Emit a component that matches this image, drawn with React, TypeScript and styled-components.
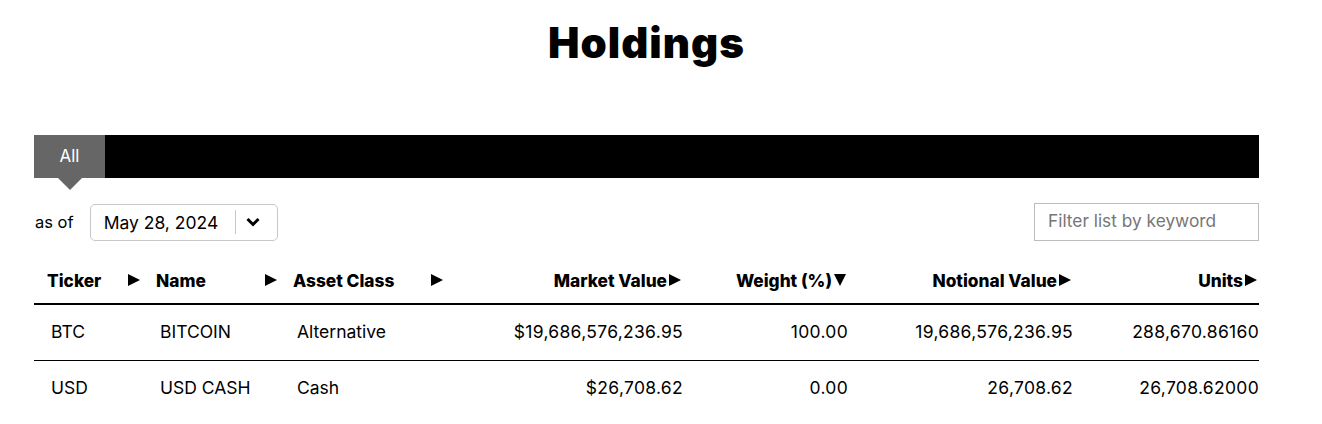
import React from "react";
import styled, { createGlobalStyle } from "styled-components";

const Global = createGlobalStyle`
  html, body { margin: 0; padding: 0; background: #fff; }
  body { font-family: Inter, "Liberation Sans", sans-serif; color: #000; }
  * { box-sizing: border-box; }
`;

const Page = styled.div`
  width: 1225px;
  margin-left: 34px;
  padding-top: 16px;
`;

const Title = styled.h1`
  margin: 0;
  text-align: center;
  font-family: Inter, "Liberation Sans", sans-serif;
  font-weight: 900;
  font-size: 42px;
  letter-spacing: 1px;
  line-height: 54px;
  height: 119px;
`;

const TabBar = styled.div`
  display: flex;
  height: 43px;
  background: #000;
`;

const Tab = styled.div`
  position: relative;
  width: 71px;
  display: flex;
  align-items: center;
  justify-content: center;
  padding-bottom: 2px;
  background: #666;
  color: #fff;
  font-size: 17px;
  &::after {
    content: "";
    position: absolute;
    left: 50%;
    top: 100%;
    margin-left: -12px;
    border-left: 12px solid transparent;
    border-right: 12px solid transparent;
    border-top: 12px solid #666;
  }
`;

const Controls = styled.div`
  display: flex;
  align-items: center;
  justify-content: space-between;
  margin-top: 25px;
  height: 38px;
`;

const AsOf = styled.div`
  display: flex;
  align-items: center;
  gap: 16px;
  padding-left: 1px;
  font-size: 16.5px;
`;

const DateSelect = styled.div`
  display: flex;
  align-items: center;
  width: 188px;
  height: 37px;
  border: 1px solid #c8c8c8;
  border-radius: 5px;
  padding-left: 13px;
  font-size: 17.5px;
`;

const DateText = styled.span`
  flex: 1;
`;

const Chevron = styled.div`
  display: flex;
  align-items: center;
  width: 42px;
  height: 24px;
  padding-left: 10px;
  border-left: 1px solid #c8c8c8;
`;

const Filter = styled.input`
  width: 225px;
  height: 38px;
  border: 1px solid #bcbcbc;
  border-radius: 0;
  padding: 0 13px 3px;
  font-family: inherit;
  font-size: 17.3px;
  outline: none;
  &::placeholder { color: #767676; }
`;

const cols = "109px 137px 166px 237px 165px 225px 186px";

const HeadRow = styled.div`
  display: grid;
  grid-template-columns: ${cols};
  margin-top: 18px;
  height: 46px;
  border-bottom: 2px solid #000;
`;

const HeadCell = styled.div<{ $right?: boolean }>`
  display: flex;
  align-items: center;
  justify-content: ${(p) => (p.$right ? "flex-end" : "space-between")};
  gap: 2px;
  padding: ${(p) => (p.$right ? "0 2px 2px 0" : "0 3px 2px 13px")};
  font-family: Inter, "Liberation Sans", sans-serif;
  font-weight: 800;
  font-size: 17.3px;
  white-space: nowrap;
`;

const Arrow = styled.svg`
  flex: none;
  display: block;
`;

const Row = styled.div<{ $last?: boolean }>`
  display: grid;
  grid-template-columns: ${cols};
  height: 56px;
  padding-bottom: 3px;
  border-bottom: ${(p) => (p.$last ? "none" : "1px solid #000")};
`;

const Cell = styled.div<{ $right?: boolean }>`
  display: flex;
  align-items: center;
  justify-content: ${(p) => (p.$right ? "flex-end" : "flex-start")};
  padding-left: ${(p) => (p.$right ? "0" : "17px")};
  font-size: 17.5px;
  letter-spacing: ${(p) => (p.$right ? "0.3px" : "0")};
  white-space: nowrap;
`;

const RightArrow = () => (
  <Arrow width="12" height="12" viewBox="0 0 12 12">
    <path d="M0 0 L12 6 L0 12 Z" fill="#000" />
  </Arrow>
);

const DownArrow = () => (
  <Arrow width="12" height="12" viewBox="0 0 12 12">
    <path d="M0 0 L12 0 L6 12 Z" fill="#000" />
  </Arrow>
);

const headers: { label: string; right?: boolean; down?: boolean }[] = [
  { label: "Ticker" },
  { label: "Name" },
  { label: "Asset Class" },
  { label: "Market Value", right: true },
  { label: "Weight (%)", right: true, down: true },
  { label: "Notional Value", right: true },
  { label: "Units", right: true },
];

const rows = [
  ["BTC", "BITCOIN", "Alternative", "$19,686,576,236.95", "100.00", "19,686,576,236.95", "288,670.86160"],
  ["USD", "USD CASH", "Cash", "$26,708.62", "0.00", "26,708.62", "26,708.62000"],
];

export default function App() {
  return (
    <>
      <Global />
      <Page>
        <Title>Holdings</Title>
        <TabBar>
          <Tab>All</Tab>
        </TabBar>
        <Controls>
          <AsOf>
            as of
            <DateSelect>
              <DateText>May 28, 2024</DateText>
              <Chevron>
                <svg width="14" height="10" viewBox="0 0 14 10">
                  <path d="M1.5 2 L7 7.5 L12.5 2" fill="none" stroke="#000" strokeWidth="3" />
                </svg>
              </Chevron>
            </DateSelect>
          </AsOf>
          <Filter placeholder="Filter list by keyword" />
        </Controls>
        <HeadRow>
          {headers.map((h) => (
            <HeadCell key={h.label} $right={h.right}>
              {h.label}
              {h.down ? <DownArrow /> : <RightArrow />}
            </HeadCell>
          ))}
        </HeadRow>
        {rows.map((r, i) => (
          <Row key={r[0]} $last={i === rows.length - 1}>
            {r.map((c, j) => (
              <Cell key={j} $right={j >= 3}>
                {c}
              </Cell>
            ))}
          </Row>
        ))}
      </Page>
    </>
  );
}
